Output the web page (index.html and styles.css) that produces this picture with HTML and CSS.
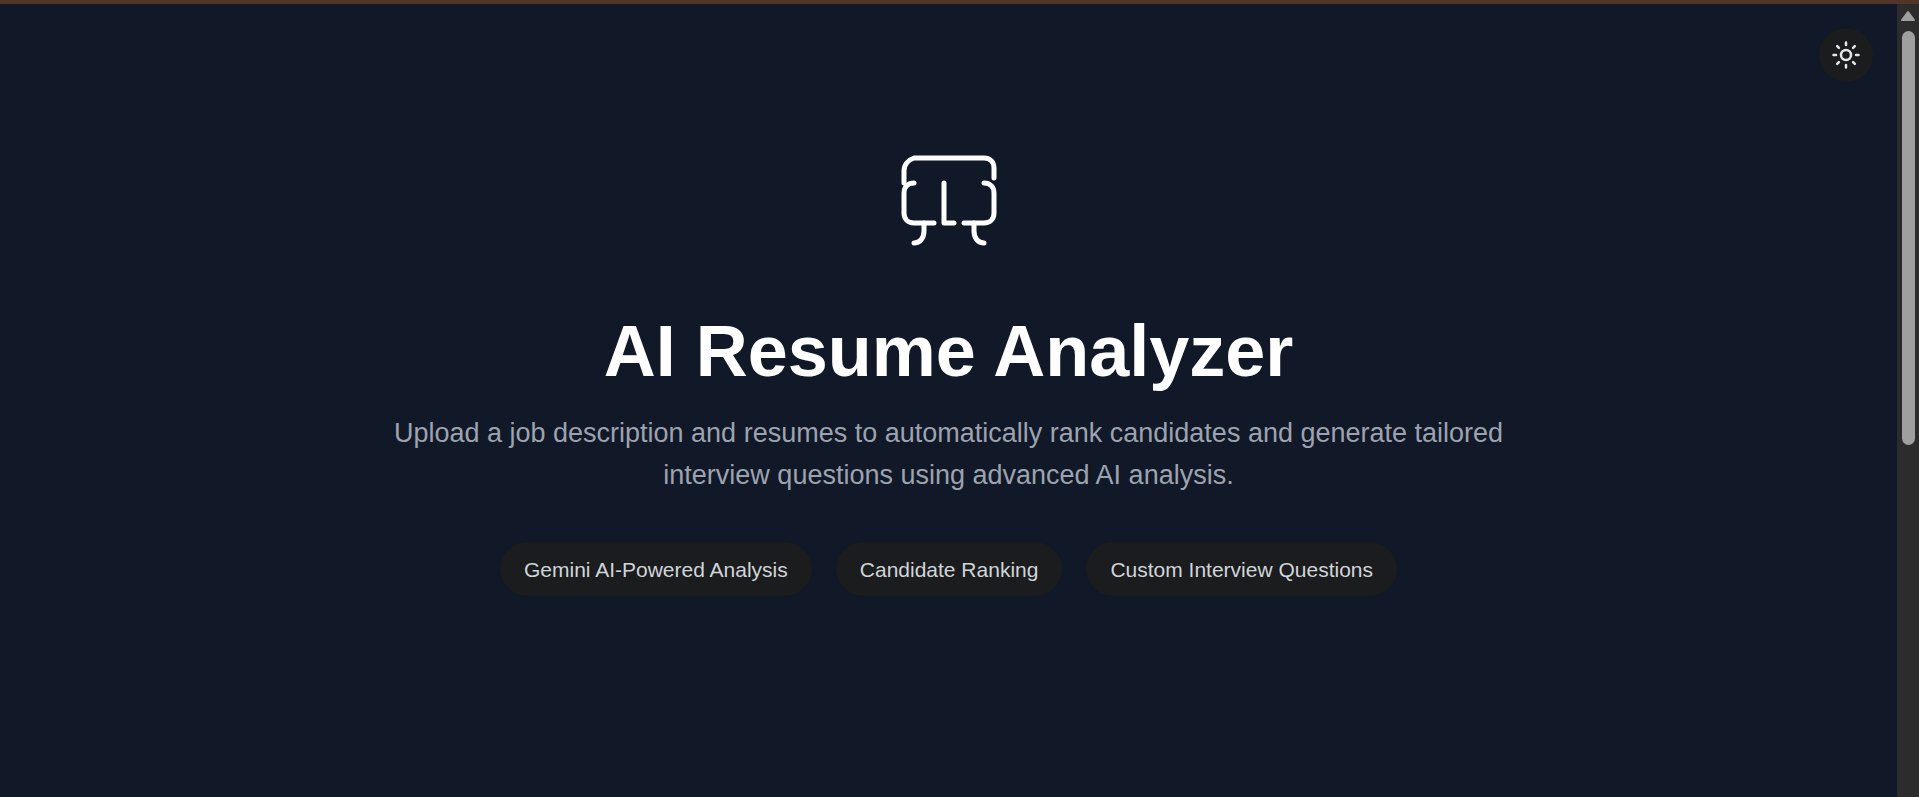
FILE: index.html
```html
<!DOCTYPE html>
<html lang="en">
<head>
<meta charset="utf-8">
<title>AI Resume Analyzer</title>
<link rel="stylesheet" href="styles.css">
</head>
<body>
<div class="page">
  <main class="hero">
    <button class="theme-toggle" type="button" aria-label="Toggle theme">
      <svg width="30" height="30" viewBox="0 0 24 24" fill="none" stroke="currentColor" stroke-width="2" stroke-linecap="round">
        <circle cx="12" cy="12" r="4"/>
        <path d="M12 2v2M12 20v2M4.93 4.93l1.41 1.41M17.66 17.66l1.41 1.41M2 12h2M20 12h2M6.34 17.66l-1.41 1.41M19.07 4.93l-1.41 1.41"/>
      </svg>
    </button>
    <svg class="logo" width="120" height="120" viewBox="9 0 120 120" fill="none" stroke="currentColor" stroke-width="5" stroke-linecap="round" stroke-linejoin="round" aria-hidden="true">
      <path d="M24 43V31C24 25 28 20 34 18H104C110 18 114 22 114 28V38"/>
      <path d="M34 43C28 43 24 47 24 53V73C24 79 28 83 34 83H54"/>
      <path d="M104 43C110 43 114 47 114 53V73C114 79 110 83 104 83H84"/>
      <path d="M64 43V83H74"/>
      <path d="M44 83V91C44 98 40 103 34 103"/>
      <path d="M94 83V91C94 98 98 103 104 103"/>
    </svg>
    <h1 class="title">AI Resume Analyzer</h1>
    <p class="subtitle">Upload a job description and resumes to automatically rank candidates and generate tailored interview questions using advanced AI analysis.</p>
    <ul class="features">
      <li class="feature">Gemini AI-Powered Analysis</li>
      <li class="feature">Candidate Ranking</li>
      <li class="feature">Custom Interview Questions</li>
    </ul>
  </main>
  <div class="scrollbar" aria-hidden="true">
    <svg class="scroll-arrow" width="16" height="12" viewBox="0 0 16 12"><path d="M8 2L14 10H2Z" fill="currentColor" stroke="currentColor" stroke-width="2" stroke-linejoin="round"/></svg>
    <div class="scroll-thumb"></div>
  </div>
</div>
</body>
</html>
```
FILE: styles.css
```css
* {
  box-sizing: border-box;
}

body {
  margin: 0;
  background: #111827;
  color: #ffffff;
  font-family: "Liberation Sans", Arial, sans-serif;
}

.page {
  display: flex;
  min-height: 100vh;
  border-top: 4px solid #503528;
}

.hero {
  position: relative;
  flex: 1;
  display: flex;
  flex-direction: column;
  align-items: center;
  padding: 136px 24px 48px;
  text-align: center;
}

.theme-toggle {
  position: absolute;
  top: 24px;
  right: 24px;
  display: flex;
  padding: 12px;
  border: 0;
  border-radius: 50%;
  background: #1a1c1d;
  color: #e5e7eb;
  cursor: pointer;
}

.logo {
  display: block;
}

.title {
  margin: 46px 0 16px;
  font-size: 72px;
  line-height: 90px;
  font-weight: 700;
}

.subtitle {
  max-width: 1152px;
  margin: 0 0 46px;
  color: #9ca3af;
  font-size: 27px;
  line-height: 42px;
}

.features {
  display: flex;
  flex-wrap: wrap;
  justify-content: center;
  gap: 24px;
  margin: 0;
  padding: 0;
  list-style: none;
}

.feature {
  padding: 12px 24px 10px;
  border-radius: 27px;
  background: #1a1c1d;
  color: #d1d5db;
  font-size: 21px;
  line-height: 32px;
}

.scrollbar {
  display: flex;
  flex-direction: column;
  align-items: center;
  gap: 9px;
  width: 22px;
  padding-top: 6px;
  background: #2c2c2c;
  color: #9f9f9f;
}

.scroll-thumb {
  width: 13px;
  height: 52vh;
  border-radius: 7px;
  background: #9f9f9f;
}
```
